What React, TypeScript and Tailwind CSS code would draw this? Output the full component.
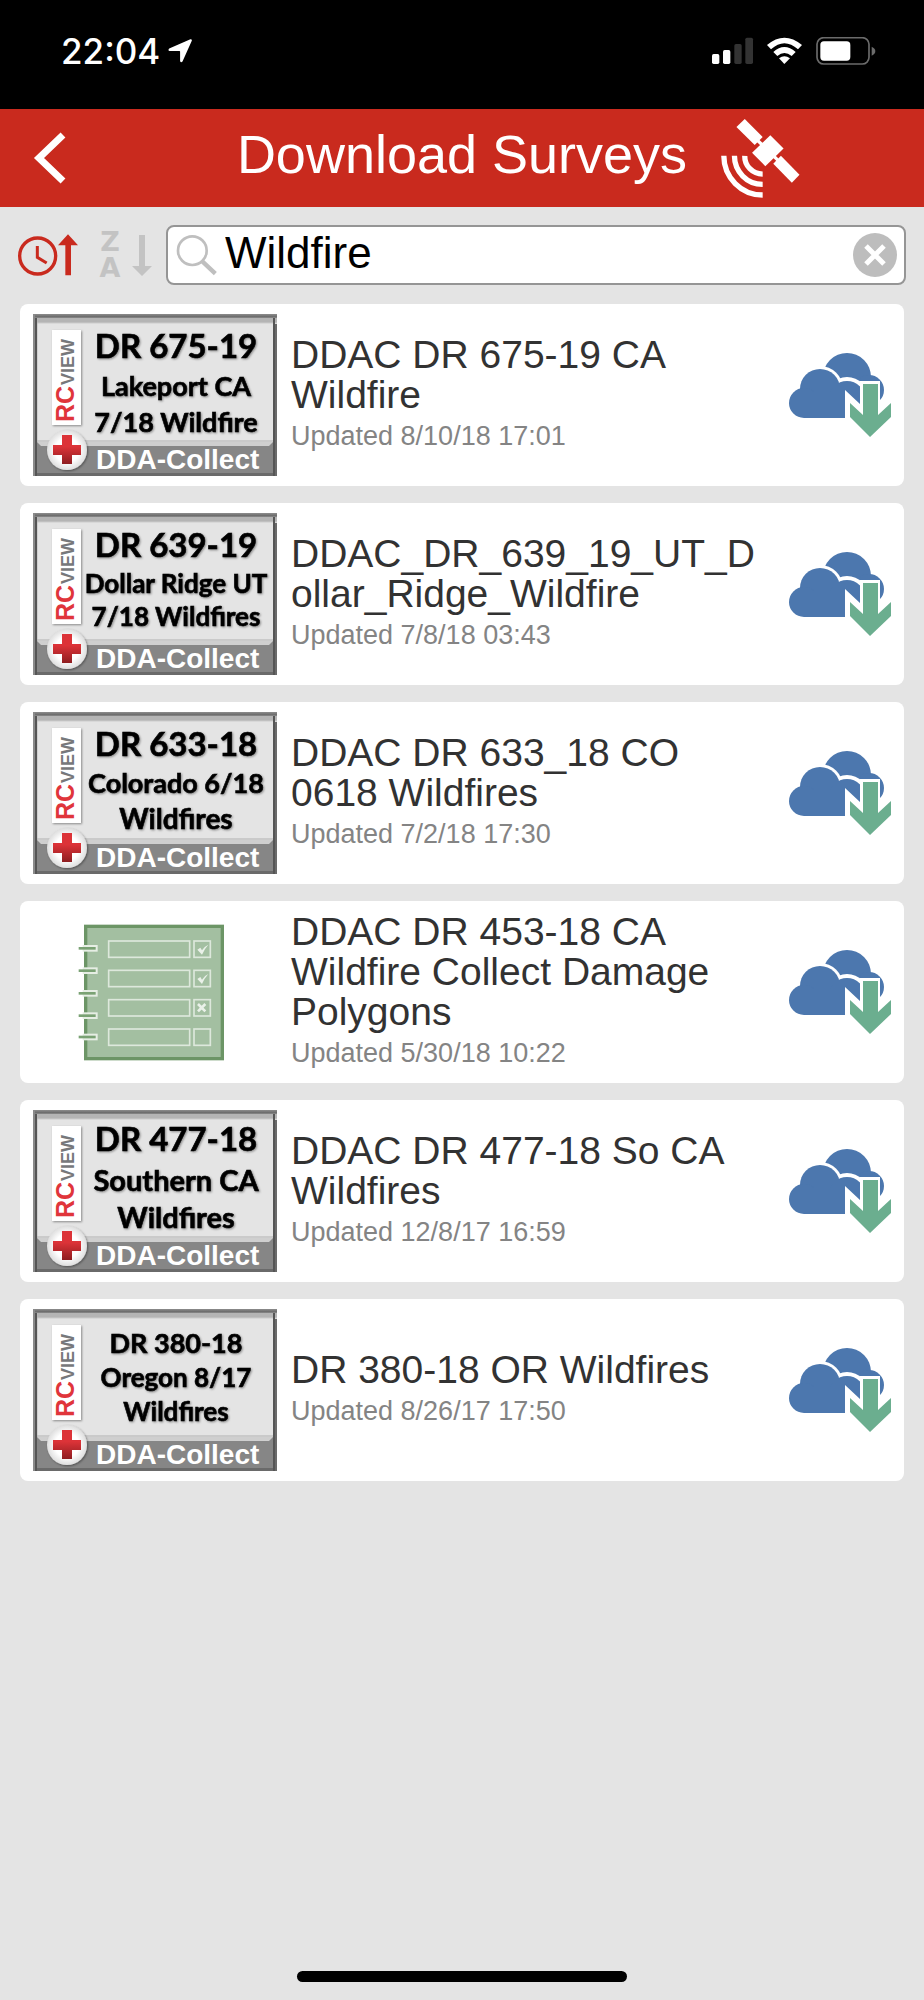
import { useState } from 'react';

interface BadgeLine {
  text: string;
  size: number;
  y: number;
}

interface Survey {
  id: string;
  title: string;
  updated: string;
  badge?: BadgeLine[];
}

const surveys: Survey[] = [
  {
    id: '675-19',
    title: 'DDAC DR 675-19 CA Wildfire',
    updated: 'Updated 8/10/18 17:01',
    badge: [
      { text: 'DR 675-19', size: 33, y: 44 },
      { text: 'Lakeport CA', size: 27, y: 82 },
      { text: '7/18 Wildfire', size: 27, y: 118 },
    ],
  },
  {
    id: '639-19',
    title: 'DDAC_DR_639_19_UT_Dollar_Ridge_Wildfire',
    updated: 'Updated 7/8/18 03:43',
    badge: [
      { text: 'DR 639-19', size: 33, y: 44 },
      { text: 'Dollar Ridge UT', size: 26, y: 80 },
      { text: '7/18 Wildfires', size: 26, y: 113 },
    ],
  },
  {
    id: '633-18',
    title: 'DDAC DR 633_18 CO 0618 Wildfires',
    updated: 'Updated 7/2/18 17:30',
    badge: [
      { text: 'DR 633-18', size: 33, y: 44 },
      { text: 'Colorado 6/18', size: 27, y: 81 },
      { text: 'Wildfires', size: 28, y: 117 },
    ],
  },
  {
    id: '453-18',
    title: 'DDAC DR 453-18 CA Wildfire Collect Damage Polygons',
    updated: 'Updated 5/30/18 10:22',
  },
  {
    id: '477-18',
    title: 'DDAC DR 477-18 So CA Wildfires',
    updated: 'Updated 12/8/17 16:59',
    badge: [
      { text: 'DR 477-18', size: 33, y: 41 },
      { text: 'Southern CA', size: 29, y: 81 },
      { text: 'Wildfires', size: 29, y: 118 },
    ],
  },
  {
    id: '380-18',
    title: 'DR 380-18 OR Wildfires',
    updated: 'Updated 8/26/17 17:50',
    badge: [
      { text: 'DR 380-18', size: 27, y: 44 },
      { text: 'Oregon 8/17', size: 26, y: 78 },
      { text: 'Wildfires', size: 26, y: 112 },
    ],
  },
];

export default function App() {
  const [query, setQuery] = useState('Wildfire');

  return (
    <div className="flex min-h-screen flex-col bg-[#e4e4e4] font-['Liberation_Sans',Arial,sans-serif]">
      <StatusBar />
      <header className="grid h-[98px] grid-cols-[1fr_auto_1fr] items-center bg-[#c92a1e]">
        <button type="button" aria-label="Back" className="ml-8 w-fit">
          <svg className="h-[52px] w-[34px]" viewBox="0 0 34 52" fill="none" stroke="#fff" strokeWidth="7">
            <path d="M31 3 L7 26 L31 49" />
          </svg>
        </button>
        <h1 className="pb-2 text-[54px] leading-[60px] text-white">Download Surveys</h1>
        <SatelliteIcon />
      </header>
      <div className="flex items-center px-[18px] pt-[18px] pb-[19px]">
        <button type="button" aria-label="Sort by date">
          <svg className="h-[50px] w-[60px]" viewBox="54 690 180 150">
            <circle cx="113" cy="768" r="54" fill="none" stroke="#c92a1e" strokeWidth="10" />
            <path d="M112 738 V772 L140 789" fill="none" stroke="#c92a1e" strokeWidth="9" />
            <path d="M204 703 L234 736 H213 V826 H196 V736 H174 Z" fill="#c92a1e" />
          </svg>
        </button>
        <button type="button" aria-label="Sort by name" className="ml-5 flex items-center">
          <span className="flex w-6 flex-col text-center font-['DejaVu_Sans'] text-[27px] leading-[26px] font-bold text-[#c3c3c3]">
            <span>Z</span>
            <span>A</span>
          </span>
          <svg className="ml-[10px] h-[41px] w-5" viewBox="0 0 20 41" fill="#c3c3c3">
            <path d="M7 0 H13 V31 H20 L10 41 L0 31 H7 Z" />
          </svg>
        </button>
        <div className="ml-[14px] flex h-[60px] min-w-0 flex-1 items-center rounded-lg border-2 border-[#959595] bg-white pl-2 pr-[7px]">
          <svg className="h-[42px] w-[42px] shrink-0" viewBox="527 702 126 126" fill="none" stroke="#bfbfbf">
            <circle cx="576" cy="752" r="43" strokeWidth="8" />
            <path d="M606 784 L645 821" strokeWidth="13" />
          </svg>
          <input
            type="text"
            aria-label="Search surveys"
            value={query}
            onChange={(e) => setQuery(e.target.value)}
            className="ml-[7px] h-[56px] min-w-0 flex-1 pb-1 text-[44px] text-black outline-none"
          />
          <button type="button" aria-label="Clear search" onClick={() => setQuery('')}>
            <svg className="h-[44px] w-[44px]" viewBox="0 0 44 44">
              <circle cx="22" cy="22" r="22" fill="#bdbdbd" />
              <path d="M13 13 L31 31 M31 13 L13 31" stroke="#fff" strokeWidth="5" />
            </svg>
          </button>
        </div>
      </div>
      <ul className="flex flex-col gap-[17px] px-5">
        {surveys.map((s) => (
          <SurveyCard key={s.id} survey={s} />
        ))}
      </ul>
      <div className="mx-auto mt-auto mb-[18px] h-[11px] w-[330px] rounded-full bg-black" />
    </div>
  );
}

function SurveyCard({ survey }: { survey: Survey }) {
  return (
    <li className="flex min-h-[182px] items-center rounded-lg bg-white pl-[13px] pr-3">
      {survey.badge ? <BadgeThumbnail lines={survey.badge} /> : <FormThumbnail />}
      <div className="ml-[14px] min-w-0 flex-1 pb-1">
        <h2 className="text-[39px] leading-10 text-[#323232] wrap-anywhere">{survey.title}</h2>
        <p className="mt-[6px] text-[27px] leading-[30px] text-[#848484]">{survey.updated}</p>
      </div>
      <button type="button" aria-label={`Download ${survey.title}`} className="ml-[18px] shrink-0">
        <CloudDownloadIcon />
      </button>
    </li>
  );
}

function BadgeThumbnail({ lines }: { lines: BadgeLine[] }) {
  return (
    <svg className="h-[162px] w-[244px] shrink-0" viewBox="0 0 244 162">
      <defs>
        <linearGradient id="bevelTop" x1="0" y1="0" x2="0" y2="1">
          <stop offset="0" stopColor="#8d8d8d" />
          <stop offset="0.3" stopColor="#686868" />
          <stop offset="0.45" stopColor="#b4b4b4" />
          <stop offset="0.8" stopColor="#b4b4b4" />
          <stop offset="1" stopColor="#e4e4e4" />
        </linearGradient>
        <linearGradient id="cross" x1="0" y1="0" x2="0" y2="1">
          <stop offset="0.4" stopColor="#dc3338" />
          <stop offset="1" stopColor="#8e1d20" />
        </linearGradient>
        <radialGradient id="disc">
          <stop offset="0.6" stopColor="#fff" />
          <stop offset="1" stopColor="#dedede" />
        </radialGradient>
        <filter id="soft" x="-20%" y="-20%" width="140%" height="150%">
          <feDropShadow dx="1" dy="1" stdDeviation="1" floodColor="#000" floodOpacity="0.4" />
        </filter>
      </defs>
      <rect width="244" height="162" fill="#6a6a6a" />
      <rect x="4" y="3" width="236" height="125" fill="#e4e4e4" />
      <rect width="244" height="10" fill="url(#bevelTop)" />
      <path d="M4 4 V128" stroke="#b9b9b9" strokeWidth="1" />
      <rect x="4" y="128" width="236" height="31" fill="#868686" />
      <path d="M4 128 H240 L236 132 H8 Z" fill="#cfcfcf" />
      <path d="M4 127 H240" stroke="#b0b0b0" strokeWidth="1" />
      <rect width="2" height="162" fill="#8a8a8a" />
      <path d="M3 4 V162 M241 4 V162" stroke="#555" strokeWidth="2" />
      <rect x="19" y="16" width="29" height="95" fill="#fff" filter="url(#soft)" />
      <g transform="translate(41 108) rotate(-90)" fontFamily="Liberation Sans" fontWeight="bold">
        <text fontSize="25" fill="#e0353b">RC</text>
        <text x="37" fontSize="18" fill="#77787b">VIEW</text>
      </g>
      <circle cx="34" cy="136" r="20" fill="url(#disc)" filter="url(#soft)" />
      <path d="M29 121 H39 V131 H48 V141 H39 V150 H29 V141 H20 V131 H29 Z" fill="url(#cross)" />
      <g
        fontFamily="Lato"
        fontWeight="bold"
        textAnchor="middle"
        stroke="#000"
        strokeWidth="0.6"
        filter="url(#soft)"
      >
        {lines.map((l) => (
          <text key={l.text} x="143" y={l.y} fontSize={l.size}>
            {l.text}
          </text>
        ))}
      </g>
      <text x="63" y="155" fontFamily="Liberation Sans" fontWeight="bold" fontSize="28" fill="#fff">
        DDA-Collect
      </text>
    </svg>
  );
}

function FormThumbnail() {
  return (
    <svg className="h-[162px] w-[244px] shrink-0" viewBox="99 48 732 486" fill="none">
      <rect x="257" y="94" width="410" height="397" fill="#a3bfa1" stroke="#6c9566" strokeWidth="10" />
      {[160, 227, 295, 362, 426].map((y) => (
        <g key={y}>
          <rect x="248" y={y - 10} width="45" height="20" fill="#e6eee4" />
          <path d={`M236 ${y} H287`} stroke="#7aa274" strokeWidth="8" />
        </g>
      ))}
      {[138, 226, 314, 402].map((y) => (
        <g key={y} stroke="#dde8dc" strokeWidth="5">
          <rect x="326" y={y} width="243" height="49" />
          <rect x="582" y={y} width="49" height="49" />
        </g>
      ))}
      <path d="M592 164 L601 158 L606 166 Q613 154 625 149 Q613 162 606 179 Z" fill="#eaf1e9" />
      <path d="M592 252 L601 246 L606 254 Q613 242 625 237 Q613 250 606 267 Z" fill="#eaf1e9" />
      <path d="M594 327 L616 349 M616 327 L594 349" stroke="#eaf1e9" strokeWidth="8" />
    </svg>
  );
}

function CloudDownloadIcon() {
  return (
    <svg className="h-[86px] w-[103px]" viewBox="0 0 103 86">
      <g fill="#4c77ae">
        <circle cx="58" cy="25" r="24" />
        <circle cx="80" cy="38" r="15" />
      </g>
      <g fill="#fff">
        <circle cx="31" cy="37" r="23" />
        <circle cx="58" cy="47" r="22" />
      </g>
      <g fill="#4c77ae">
        <circle cx="31" cy="37" r="20" />
        <circle cx="15" cy="51" r="15" />
        <circle cx="58" cy="47" r="18" />
        <rect x="15" y="40" width="43" height="26" />
      </g>
      <path d="M56 38 L71 52 V29 H91 V52 L103 41 V86 H56 Z" fill="#fff" />
      <path d="M61 51 L74 63 V32 H89 V63 L102 51 V65 L81 85 L61 65 Z" fill="#6bae8f" />
    </svg>
  );
}

function SatelliteIcon() {
  return (
    <svg
      className="ml-[34px] h-[79px] w-[79px]"
      viewBox="777 352 237 238"
      fill="#fff"
      role="img"
      aria-label="GPS status"
    >
      <path d="M848 352 L902 406 L878 430 L823 376 Z" />
      <path d="M925 401 L965 441 L910 494 L870 454 Z" />
      <path d="M957 463 L1013 520 L990 544 L934 487 Z" />
      <path d="M885 415 L950 478" stroke="#fff" strokeWidth="10" />
      <g fill="none" stroke="#fff" strokeWidth="16">
        <path d="M848 463 A54 54 0 0 0 902 518" />
        <path d="M817 463 A85 86 0 0 0 902 549" />
        <path d="M785 463 A117 118 0 0 0 902 581" />
      </g>
    </svg>
  );
}

function StatusBar() {
  return (
    <div className="flex h-[109px] items-center justify-between bg-black pl-[61px] pr-[48px] pb-[7px] text-white">
      <div className="flex items-center gap-2">
        <span className="font-[Inter] text-[35px] leading-10 font-medium">22:04</span>
        <svg className="h-6 w-6" viewBox="0 0 24 24" fill="#fff" aria-hidden="true">
          <path d="M22.4 0.2 L1.2 9.4 Q-0.4 11.4 1.6 11.9 H11.5 Q12.1 11.9 12.1 12.5 V22 Q12.8 24.4 14.5 22.6 L23.8 1.8 Q24.2 0 22.4 0.2 Z" />
        </svg>
      </div>
      <svg className="h-[28px] w-[164px]" viewBox="752 109 492 84" fill="#fff" aria-hidden="true">
        <rect x="752" y="160" width="22" height="30" rx="5" />
        <rect x="785" y="148" width="22" height="42" rx="5" />
        <rect x="819" y="130" width="22" height="60" rx="5" fill="#333" />
        <rect x="852" y="111" width="23" height="79" rx="5" fill="#333" />
        <path d="M917 133 Q969 89 1022 133 L1010 146 Q969 110 929 146 Z" />
        <path d="M936 154 Q969 124 1003 154 L991 166 Q969 148 948 166 Z" />
        <path d="M953 173 Q969 161 986 173 L969 190 Z" />
        <rect x="1067" y="111" width="156" height="79" rx="20" fill="none" stroke="#6b6b6b" strokeWidth="5" />
        <rect x="1077" y="122" width="90" height="58" rx="11" />
        <path d="M1231 138 Q1242 143 1242 151 Q1242 160 1231 165 Z" fill="#6b6b6b" />
      </svg>
    </div>
  );
}
